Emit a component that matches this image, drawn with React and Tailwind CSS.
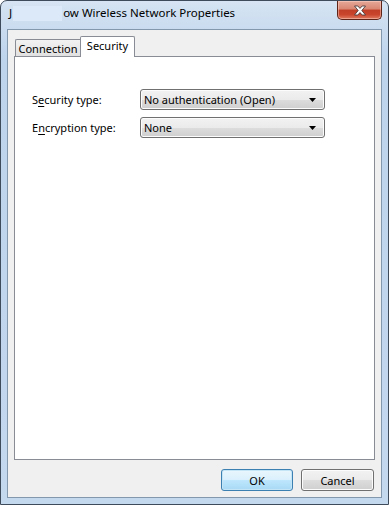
import React from "react";

const font = { fontFamily: '"Noto Sans", "Segoe UI", sans-serif' };

function Dropdown({ value }) {
  return (
    <div className="w-[185px] h-[21px] rounded-[3px] border border-[#707070] bg-[linear-gradient(#f2f2f2_0%,#ebebeb_50%,#dddddd_51%,#cfcfcf_100%)] shadow-[inset_0_0_0_1px_#fcfcfc] flex items-center justify-between pl-[3px] pr-[8px]">
      <span className="text-[11px] text-black leading-none">{value}</span>
      <svg width="7" height="4" viewBox="0 0 7 4">
        <path d="M0 0 H7 L3.5 4 Z" fill="#000" />
      </svg>
    </div>
  );
}

function Row({ label, underlineIndex, value }) {
  return (
    <div className="flex items-center h-[21px]">
      <div className="w-[108px] text-[11px] text-black leading-none">
        {label.slice(0, underlineIndex)}
        <span className="underline underline-offset-2">{label[underlineIndex]}</span>
        {label.slice(underlineIndex + 1)}
      </div>
      <Dropdown value={value} />
    </div>
  );
}

export default function App() {
  return (
    <div style={font} className="w-[389px] h-[505px] flex flex-col border border-[#3d4b5a] rounded-t-[7px] bg-[linear-gradient(180deg,#d6e4f3_0%,#c9dbef_30px,#bdd4ec_60px,#c4d8ee_100%)] overflow-hidden">
      {/* Title bar */}
      <div className="h-[28px] flex items-start justify-between">
        <div className="flex items-center h-[24px] pl-[8px] text-[11.5px] text-black">
          <span>J</span>
          <span className="w-[49px] h-[15px] mx-[1px] bg-[#dbe9f8]" />
          <span>ow Wireless Network Properties</span>
        </div>
        <div className="mr-[6px] w-[45px] h-[19px] rounded-b-[5px] border border-t-0 border-[#5f2418] bg-[linear-gradient(180deg,#e6a898_0%,#d98672_45%,#c23f27_50%,#c9452c_75%,#e07a5e_100%)] shadow-[inset_0_0_0_1px_rgba(255,220,210,0.45)] flex items-center justify-center">
          <svg width="14" height="11" viewBox="0 0 14 11">
            <path
              d="M1.5 1 H4.8 L7 3.4 L9.2 1 H12.5 L8.8 5.5 L12.5 10 H9.2 L7 7.6 L4.8 10 H1.5 L5.2 5.5 Z"
              fill="#ffffff"
              stroke="#4a3a3a"
              strokeWidth="0.9"
              strokeLinejoin="round"
            />
          </svg>
        </div>
      </div>

      {/* Client area */}
      <div className="flex-1 mx-[6px] mb-[6px] border border-[#8498ad] bg-[#f0f0f0] flex flex-col">
        <div className="flex-1 flex flex-col pt-[7px] pl-[6px] pr-[6px]">
          {/* Tabs */}
          <div className="flex items-end h-[20px] relative z-10 -mb-px pl-[1px]">
            <div className="w-[65px] h-[17px] mb-px border border-r-0 border-b-0 border-[#898c95] rounded-tl-[2px] bg-[linear-gradient(#f2f2f2,#e1e1e1)] flex items-center justify-center text-[11px] text-black leading-none">
              Connection
            </div>
            <div className="w-[55px] h-[21px] border border-b-0 border-[#898c95] rounded-t-[2px] bg-white flex items-start justify-center pt-[3px] text-[11px] text-black leading-none">
              Security
            </div>
          </div>
          {/* Panel */}
          <div className="flex-1 border border-[#898c95] bg-white pl-[17px] pt-[32px] flex flex-col gap-[7px]">
            <Row label="Security type:" underlineIndex={1} value="No authentication (Open)" />
            <Row label="Encryption type:" underlineIndex={1} value="None" />
          </div>
        </div>
        {/* Buttons */}
        <div className="h-[37px] flex items-start justify-end gap-[8px] pt-[9px] pr-[7px]">
          <button className="w-[72px] h-[22px] rounded-[3px] border border-[#3c7fb1] bg-[linear-gradient(#eaf6fd_0%,#d9f0fc_50%,#bee6fd_51%,#a7d9f5_100%)] shadow-[inset_0_0_0_1px_#c4e5f6] text-[11px] text-black leading-none">
            OK
          </button>
          <button className="w-[73px] h-[22px] rounded-[3px] border border-[#707070] bg-[linear-gradient(#f2f2f2_0%,#ebebeb_50%,#dddddd_51%,#cfcfcf_100%)] shadow-[inset_0_0_0_1px_#fcfcfc] text-[11px] text-black leading-none">
            Cancel
          </button>
        </div>
      </div>
    </div>
  );
}
